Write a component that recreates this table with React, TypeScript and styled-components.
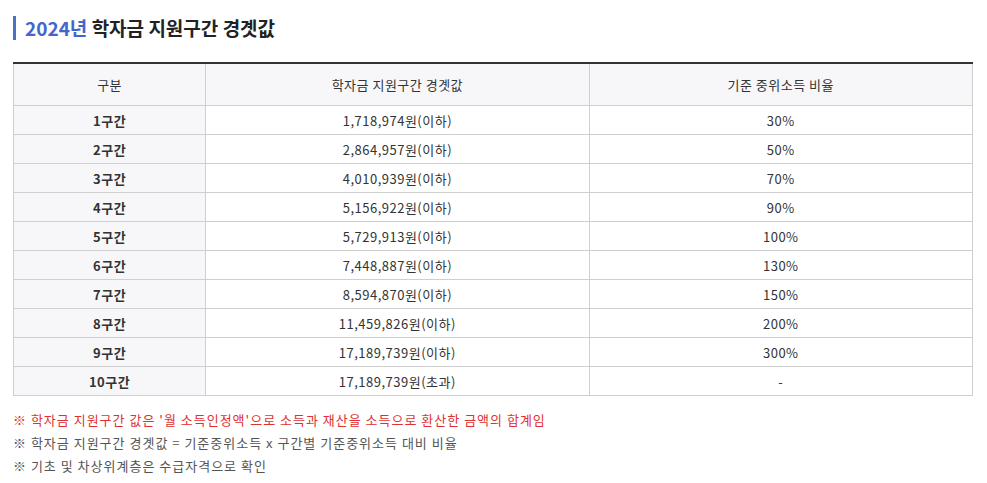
import React from "react";
import styled, { createGlobalStyle } from "styled-components";

const Global = createGlobalStyle`
  html, body { margin: 0; padding: 0; background: #fff; }
  body {
    font-family: "Noto Sans CJK KR", "Noto Sans", sans-serif;
    color: #333;
  }
`;

const Page = styled.div`
  padding: 16px 14px 0 13px;
  width: 960px;
`;

const Title = styled.h2`
  margin: 0 0 22px 0;
  display: flex;
  align-items: center;
  gap: 9px;
  font-size: 19px;
  font-weight: 700;
  color: #222;
  line-height: 24px;
  letter-spacing: 0;
`;

const Bar = styled.span`
  width: 3px;
  height: 24px;
  background: #4a72c4;
`;

const Year = styled.span`
  color: #4466cc;
`;

const Table = styled.table`
  width: 960px;
  border-collapse: collapse;
  table-layout: fixed;
  border-top: 2px solid #333;
  font-size: 13px;
  letter-spacing: 0.5px;
`;

const Th = styled.th<{ $w: string }>`
  width: ${(p) => p.$w};
  height: 41px;
  padding: 0;
  background: #f7f7f9;
  border: 1px solid #cfcfcf;
  border-top: none;
  font-weight: 400;
  color: #333;
  text-align: center;
`;

const Td = styled.td<{ $head?: boolean }>`
  height: 28px;
  padding: 0;
  border: 1px solid #cfcfcf;
  text-align: center;
  color: #333;
  background: ${(p) => (p.$head ? "#f7f7f9" : "#fff")};
  font-weight: ${(p) => (p.$head ? 700 : 400)};
`;

const Notes = styled.ul`
  list-style: none;
  margin: 12px 0 0 0;
  padding: 0;
  font-size: 13px;
  letter-spacing: 1px;
  line-height: 23px;
`;

const Note = styled.li<{ $red?: boolean }>`
  color: ${(p) => (p.$red ? "#e03131" : "#555")};
`;

const rows: [string, string, string][] = [
  ["1구간", "1,718,974원(이하)", "30%"],
  ["2구간", "2,864,957원(이하)", "50%"],
  ["3구간", "4,010,939원(이하)", "70%"],
  ["4구간", "5,156,922원(이하)", "90%"],
  ["5구간", "5,729,913원(이하)", "100%"],
  ["6구간", "7,448,887원(이하)", "130%"],
  ["7구간", "8,594,870원(이하)", "150%"],
  ["8구간", "11,459,826원(이하)", "200%"],
  ["9구간", "17,189,739원(이하)", "300%"],
  ["10구간", "17,189,739원(초과)", "-"],
];

export default function App() {
  return (
    <Page>
      <Global />
      <Title>
        <Bar />
        <span>
          <Year>2024년</Year> 학자금 지원구간 경곗값
        </span>
      </Title>
      <Table>
        <thead>
          <tr>
            <Th $w="20%">구분</Th>
            <Th $w="40%">학자금 지원구간 경곗값</Th>
            <Th $w="40%">기준 중위소득 비율</Th>
          </tr>
        </thead>
        <tbody>
          {rows.map(([a, b, c]) => (
            <tr key={a}>
              <Td $head>{a}</Td>
              <Td>{b}</Td>
              <Td>{c}</Td>
            </tr>
          ))}
        </tbody>
      </Table>
      <Notes>
        <Note $red>※ 학자금 지원구간 값은 '월 소득인정액'으로 소득과 재산을 소득으로 환산한 금액의 합계임</Note>
        <Note>※ 학자금 지원구간 경곗값 = 기준중위소득 x 구간별 기준중위소득 대비 비율</Note>
        <Note>※ 기초 및 차상위계층은 수급자격으로 확인</Note>
      </Notes>
    </Page>
  );
}
